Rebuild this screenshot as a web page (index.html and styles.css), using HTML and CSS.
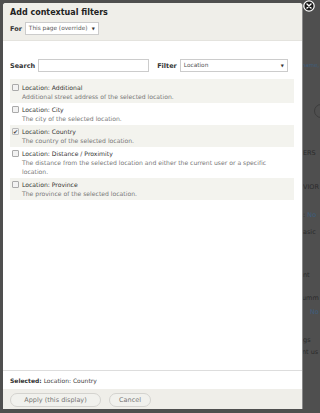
FILE: index.html
```html
<!DOCTYPE html>
<html lang="en">
<head>
    <meta charset="UTF-8">
    <meta name="viewport" content="width=device-width, initial-scale=1.0">
    <title>Add contextual filters</title>
    <link rel="stylesheet" href="styles.css">
</head>
<body>
    <div class="page">
        <p class="bg-line l-name"><a>name,</a></p>
        <p class="bg-line l-btn"><span class="bg-pill"></span></p>
        <p class="bg-line l-ers">ERS</p>
        <p class="bg-line l-vior">VIOR</p>
        <p class="bg-line l-no">: <a>No</a></p>
        <p class="bg-line l-asic">asic</p>
        <p class="bg-line l-nt">nt</p>
        <p class="bg-line l-umm">umm</p>
        <p class="bg-line l-no2"><a>No</a></p>
        <p class="bg-line l-gs">gs</p>
        <p class="bg-line l-use">nt us</p>
    </div>

    <div class="dialog">
        <div class="dialog-head">
            <h1>Add contextual filters</h1>
            <div class="for-row">
                <label>For</label>
                <span class="select select-for">This page (override)<span class="arrow">▼</span></span>
            </div>
            <span class="close">
                <svg width="12" height="12" viewBox="0 0 12 12">
                    <circle cx="6" cy="6" r="5.2" fill="#1a1a1a" stroke="#fff" stroke-width="1.2"/>
                    <path d="M4 4 L8 8 M8 4 L4 8" stroke="#fff" stroke-width="1.4" stroke-linecap="round"/>
                </svg>
            </span>
        </div>

        <div class="dialog-body">
            <div class="search-row">
                <label>Search</label>
                <span class="text-input"></span>
                <label class="filter-label">Filter</label>
                <span class="select select-filter">Location<span class="arrow">▼</span></span>
            </div>

            <ul class="options">
                <li class="odd first">
                    <span class="check"></span>
                    <div>
                        <div class="opt-title">Location: Additional</div>
                        <div class="opt-desc">Additional street address of the selected location.</div>
                    </div>
                </li>
                <li>
                    <span class="check"></span>
                    <div>
                        <div class="opt-title">Location: City</div>
                        <div class="opt-desc">The city of the selected location.</div>
                    </div>
                </li>
                <li class="odd">
                    <span class="check checked">✔</span>
                    <div>
                        <div class="opt-title">Location: Country</div>
                        <div class="opt-desc">The country of the selected location.</div>
                    </div>
                </li>
                <li>
                    <span class="check"></span>
                    <div>
                        <div class="opt-title">Location: Distance / Proximity</div>
                        <div class="opt-desc">The distance from the selected location and either the current user or a specific location.</div>
                    </div>
                </li>
                <li class="odd">
                    <span class="check"></span>
                    <div>
                        <div class="opt-title">Location: Province</div>
                        <div class="opt-desc">The province of the selected location.</div>
                    </div>
                </li>
            </ul>
        </div>

        <div class="dialog-foot">
            <div class="selected"><b>Selected:</b> Location: Country</div>
            <div class="buttons">
                <button class="btn btn-apply">Apply (this display)</button>
                <button class="btn">Cancel</button>
            </div>
        </div>
    </div>
</body>
</html>
```

FILE: styles.css
```css
body {
    margin: 0;
    height: 413px;
    overflow: hidden;
    background: #4f4f4f;
    font-family: "DejaVu Sans", Verdana, sans-serif;
    font-size: 6px;
    color: #333;
}

/* page behind the overlay, only the strip right of the dialog shows */
.page {
    padding-top: 60px;
}

.bg-line {
    margin: 0;
    height: 10px;
    padding-left: 303px;
    line-height: 10px;
    font-size: 6.5px;
    color: #2b2b2b;
    white-space: nowrap;
    overflow: hidden;
}

.bg-line a {
    color: #3e5e7e;
}

.l-name { padding-left: 302px; font-size: 5.5px; }
.l-btn { height: 14px; margin-top: 34px; padding-left: 314px; }
.l-ers { margin-top: 30px; }
.l-vior { margin-top: 24px; }
.l-no { margin-top: 18px; }
.l-asic { margin-top: 7px; }
.l-nt { margin-top: 33px; }
.l-umm { margin-top: 13px; padding-left: 302px; }
.l-no2 { margin-top: 4px; padding-left: 310px; }
.l-gs { margin-top: 18px; }
.l-use { margin-top: 2px; padding-left: 302px; }

.bg-pill {
    display: inline-block;
    width: 20px;
    height: 12px;
    vertical-align: top;
    border: 1px solid #3c3c3c;
    border-radius: 7px;
}

/* dialog */
.dialog {
    position: absolute;
    top: 3px;
    left: 3px;
    width: 299px;
    height: 406px;
    display: flex;
    flex-direction: column;
    background: #fff;
    border-radius: 3px 3px 0 0;
    box-shadow: 1px 0 0 #8a8a8a;
}

.dialog-head {
    position: relative;
    background: #efeee9;
    padding: 5px 7px 5px;
    border-radius: 3px 3px 0 0;
    border-bottom: 1px solid #e4e3de;
}

h1 {
    margin: 0 0 4px;
    font-size: 8px;
    line-height: 10px;
    font-weight: bold;
    color: #222;
}

.for-row {
    display: flex;
    align-items: center;
    gap: 3px;
}

label {
    font-weight: bold;
    font-size: 6.5px;
    color: #333;
}

.select {
    position: relative;
    display: inline-block;
    box-sizing: border-box;
    height: 13px;
    line-height: 11px;
    padding: 0 10px 0 3px;
    border: 1px solid #ccc;
    background: #fff;
    color: #555;
    font-size: 5.8px;
    white-space: nowrap;
}

.select-for {
    width: 74px;
}

.select-filter {
    width: 108px;
}

.arrow {
    position: absolute;
    right: 3px;
    top: 0;
    font-size: 4px;
    color: #333;
}

.close {
    position: absolute;
    top: -3px;
    right: -13px;
    line-height: 0;
}

.dialog-body {
    flex: 1;
    padding: 18px 7px 0;
}

.search-row {
    display: flex;
    align-items: center;
    gap: 3px;
}

.text-input {
    box-sizing: border-box;
    width: 111px;
    height: 13px;
    border: 1px solid #ccc;
    background: #fff;
}

.filter-label {
    margin-left: 5px;
}

.options {
    list-style: none;
    margin: 7px 0 0;
    padding: 0;
    width: 284px;
    font-size: 6.1px;
}

.options li {
    display: flex;
    align-items: flex-start;
    gap: 3px;
    padding: 2px;
    line-height: 9px;
}

.options li.first {
    padding-top: 4px;
}

.options li.odd {
    background: #f3f3ee;
}

.check {
    box-sizing: border-box;
    flex: none;
    width: 7px;
    height: 7px;
    margin-top: 1px;
    border: 1px solid #aaa;
    border-radius: 1px;
    background: #f2f2f2;
    font-size: 6px;
    line-height: 5px;
    color: #444;
}

.check.checked {
    border-color: #bbb;
}

.opt-title {
    color: #333;
}

.opt-desc {
    color: #777;
}

.dialog-foot {
    border-top: 1px solid #ddd;
}

.selected {
    padding: 5px 7px 4px;
    line-height: 9px;
    color: #444;
}

.selected b {
    color: #333;
}

.buttons {
    display: flex;
    gap: 8px;
    padding: 4px 7px 2px;
    background: #efeee9;
}

.btn {
    height: 14px;
    padding: 0 9px;
    border: 1px solid #d4d3cf;
    border-radius: 8px;
    background: #f1f1ed;
    font-family: "DejaVu Sans", Verdana, sans-serif;
    font-size: 6.5px;
    color: #777;
}

.btn-apply {
    width: 91px;
}
```
